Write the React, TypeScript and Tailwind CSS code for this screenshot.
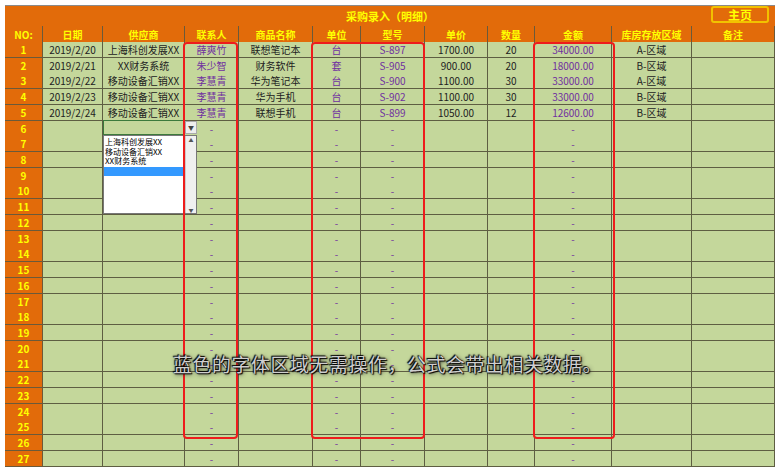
const cols = [38, 60, 82, 54, 74, 48, 64, 63, 47, 77, 80, 83];
const heads = ["NO:", "日期", "供应商", "联系人", "商品名称", "单位", "型号", "单价", "数量", "金额", "库房存放区域", "备注"];
const data = [
  ["2019/2/20", "上海科创发展XX", "薛爽竹", "联想笔记本", "台", "S-897", "1700.00", "20", "34000.00", "A-区域"],
  ["2019/2/21", "XX财务系统", "朱少智", "财务软件", "套", "S-905", "900.00", "20", "18000.00", "B-区域"],
  ["2019/2/22", "移动设备汇销XX", "李慧青", "华为笔记本", "台", "S-900", "1100.00", "30", "33000.00", "A-区域"],
  ["2019/2/23", "移动设备汇销XX", "李慧青", "华为手机", "台", "S-902", "1100.00", "30", "33000.00", "B-区域"],
  ["2019/2/24", "移动设备汇销XX", "李慧青", "联想手机", "台", "S-899", "1050.00", "12", "12600.00", "B-区域"],
];
const purple = [2, 4, 5, 8];
const grid = { gridTemplateColumns: cols.map((c) => c + "px").join(" ") };

export default function App() {
  const rows = Array.from({ length: 27 }, (_, i) => i);
  return (
    <div className="relative w-[780px] h-[473px] bg-white overflow-hidden" style={{ fontFamily: '"Noto Sans CJK SC", "Liberation Sans", sans-serif' }}>
      <div className="absolute left-[5px] top-[5px] w-[770px] border-t border-[#8a8a8a]">
        <div className="relative h-[20px] bg-[#e26b0a] flex items-center justify-center text-[11px] font-bold text-[#ffff00]">
          采购录入（明细）
          <div className="absolute right-[6px] top-[0px] w-[58px] h-[17px] rounded-[3px] border-2 border-[#f2c200] flex items-center justify-center text-[12px] text-[#ffff00]">主页</div>
        </div>
        <div className="grid h-[16px] bg-[#e26b0a] text-[#ffff00] text-[10px] font-bold" style={grid}>
          {heads.map((h) => (
            <div key={h} className="border-r border-[#6b5a3a] flex items-center justify-center">{h}</div>
          ))}
        </div>
        {rows.map((r) => {
          const d = data[r];
          const h = Math.round((r + 1) * 15.72) - Math.round(r * 15.72);
          return (
            <div key={r} className="grid text-[10px] text-[#222]" style={{ ...grid, height: h }}>
              <div className="bg-[#e26b0a] text-[#ffff00] font-bold flex items-center justify-center border-b border-r border-[#6b5a3a]">{r + 1}</div>
              {Array.from({ length: 11 }, (_, c) => {
                const v = d ? d[c] : purple.includes(c) ? "-" : "";
                return (
                  <div key={c} className={"bg-[#c4d79b] border-b border-r border-[#5e5e42] flex items-center justify-center leading-none " + (purple.includes(c) ? "text-[#7030a0]" : "")}>{v}</div>
                );
              })}
            </div>
          );
        })}
      </div>
      {/* dropdown */}
      <div className="absolute left-[103px] top-[120px] w-[82px] h-[15px] border border-[#3c7a3c] bg-[#c4d79b]" />
      <div className="absolute left-[185px] top-[121px] w-[12px] h-[13px] bg-[#eee] border border-[#aaa] text-[6px] flex items-center justify-center text-[#444]">▼</div>
      <div className="absolute left-[103px] top-[135px] w-[94px] h-[79px] bg-white border border-[#777] flex">
        <div className="flex-1 text-[8px] leading-[9.5px] text-black pt-[1px]">
          <div className="pl-[1px]">上海科创发展XX</div>
          <div className="pl-[1px]">移动设备汇销XX</div>
          <div className="pl-[1px]">XX财务系统</div>
          <div className="h-[9px] bg-[#3399ff] mt-[1px]" />
        </div>
        <div className="w-[11px] bg-[#f0f0f0] border-l border-[#ccc] flex flex-col justify-between items-center text-[5px] text-[#555]">
          <span>▲</span>
          <span>▼</span>
        </div>
      </div>
      {/* red boxes */}
      <div className="absolute left-[183px] top-[42px] w-[55px] h-[397px] border-2 border-[#ee1c1c] rounded-[4px]" />
      <div className="absolute left-[311px] top-[42px] w-[114px] h-[397px] border-2 border-[#ee1c1c] rounded-[4px]" />
      <div className="absolute left-[533px] top-[42px] w-[82px] h-[397px] border-2 border-[#ee1c1c] rounded-[4px]" />
      <div className="absolute left-[173px] top-[350px] text-[19px] text-[#cfcfcf] tracking-[0.5px]" style={{ textShadow: "0 0 1px #000, 1px 1px 1px #000, -1px -1px 1px #000, 1px 1px 4px #333" }}>
        蓝色的字体区域无需操作，公式会带出相关数据。
      </div>
    </div>
  );
}
